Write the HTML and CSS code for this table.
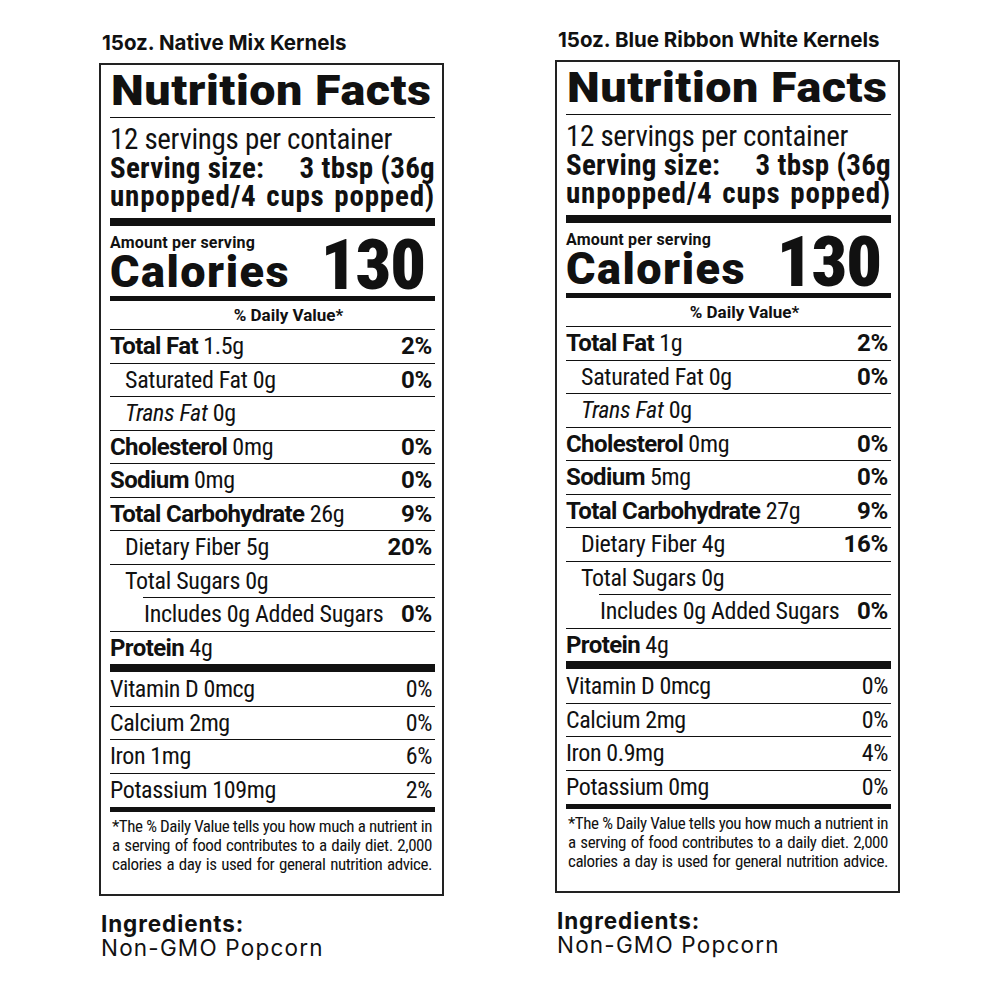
FILE: index.html
```html
<!DOCTYPE html>
<html lang="en">
<head>
<meta charset="utf-8">
<title>Nutrition Facts</title>
<link rel="stylesheet" href="styles.css">
</head>
<body>
<main class="page">
  <section class="col col--left">
    <h2 class="product">15oz. Native Mix Kernels</h2>
    <div class="label">
      <h1 class="label__title"><span class="label__title-text">Nutrition Facts</span></h1>
      <div class="serving">
        <div class="serving__count">12 servings per container</div>
        <div class="serving__size"><span>Serving size:</span><span>3 tbsp (36g</span></div>
        <div class="serving__popped">unpopped/4 cups popped)</div>
      </div>
      <div class="calories">
        <div class="calories__left">
          <div class="calories__amount">Amount per serving</div>
          <div class="calories__word">Calories</div>
        </div>
        <div class="calories__num">130</div>
      </div>
      <div class="dv">% Daily Value*</div>
      <div class="nutrients">
        <div class="row"><span><b>Total Fat</b> 1.5g</span><b>2%</b></div>
        <div class="row row--sub"><span>Saturated Fat 0g</span><b>0%</b></div>
        <div class="row row--sub"><span><i>Trans Fat</i> 0g</span></div>
        <div class="row"><span><b>Cholesterol</b> 0mg</span><b>0%</b></div>
        <div class="row"><span><b>Sodium</b> 0mg</span><b>0%</b></div>
        <div class="row"><span><b>Total Carbohydrate</b> 26g</span><b>9%</b></div>
        <div class="row row--sub"><span>Dietary Fiber 5g</span><b>20%</b></div>
        <div class="row row--sub"><span>Total Sugars 0g</span></div>
        <div class="row row--sub2"><span>Includes 0g Added Sugars</span><b>0%</b></div>
        <div class="row"><span><b>Protein</b> 4g</span></div>
      </div>
      <div class="vitamins">
        <div class="vrow"><span>Vitamin D 0mcg</span><span>0%</span></div>
        <div class="vrow"><span>Calcium 2mg</span><span>0%</span></div>
        <div class="vrow"><span>Iron 1mg</span><span>6%</span></div>
        <div class="vrow"><span>Potassium 109mg</span><span>2%</span></div>
      </div>
      <p class="foot">*The % Daily Value tells you how much a nutrient in<br>a serving of food contributes to a daily diet. 2,000<br>calories a day is used for general nutrition advice.</p>
    </div>
    <div class="ingredients">
      <div class="ingredients__title">Ingredients:</div>
      <div class="ingredients__text">Non-GMO Popcorn</div>
    </div>
  </section>

  <section class="col col--right">
    <h2 class="product">15oz. Blue Ribbon White Kernels</h2>
    <div class="label">
      <h1 class="label__title"><span class="label__title-text">Nutrition Facts</span></h1>
      <div class="serving">
        <div class="serving__count">12 servings per container</div>
        <div class="serving__size"><span>Serving size:</span><span>3 tbsp (36g</span></div>
        <div class="serving__popped">unpopped/4 cups popped)</div>
      </div>
      <div class="calories">
        <div class="calories__left">
          <div class="calories__amount">Amount per serving</div>
          <div class="calories__word">Calories</div>
        </div>
        <div class="calories__num">130</div>
      </div>
      <div class="dv">% Daily Value*</div>
      <div class="nutrients">
        <div class="row"><span><b>Total Fat</b> 1g</span><b>2%</b></div>
        <div class="row row--sub"><span>Saturated Fat 0g</span><b>0%</b></div>
        <div class="row row--sub"><span><i>Trans Fat</i> 0g</span></div>
        <div class="row"><span><b>Cholesterol</b> 0mg</span><b>0%</b></div>
        <div class="row"><span><b>Sodium</b> 5mg</span><b>0%</b></div>
        <div class="row"><span><b>Total Carbohydrate</b> 27g</span><b>9%</b></div>
        <div class="row row--sub"><span>Dietary Fiber 4g</span><b>16%</b></div>
        <div class="row row--sub"><span>Total Sugars 0g</span></div>
        <div class="row row--sub2"><span>Includes 0g Added Sugars</span><b>0%</b></div>
        <div class="row"><span><b>Protein</b> 4g</span></div>
      </div>
      <div class="vitamins">
        <div class="vrow"><span>Vitamin D 0mcg</span><span>0%</span></div>
        <div class="vrow"><span>Calcium 2mg</span><span>0%</span></div>
        <div class="vrow"><span>Iron 0.9mg</span><span>4%</span></div>
        <div class="vrow"><span>Potassium 0mg</span><span>0%</span></div>
      </div>
      <p class="foot">*The % Daily Value tells you how much a nutrient in<br>a serving of food contributes to a daily diet. 2,000<br>calories a day is used for general nutrition advice.</p>
    </div>
    <div class="ingredients">
      <div class="ingredients__title">Ingredients:</div>
      <div class="ingredients__text">Non-GMO Popcorn</div>
    </div>
  </section>
</main>
</body>
</html>
```
FILE: styles.css
```css
* { box-sizing: border-box; }

html, body {
  margin: 0;
  padding: 0;
  background: #ffffff;
  color: #111111;
}

.page {
  display: flex;
  align-items: flex-start;
  gap: 111px;
  padding-left: 99px;
}

.col {
  width: 345px;
  display: flex;
  flex-direction: column;
}

.col--left { padding-top: 31px; }
.col--right { padding-top: 28px; }

.product {
  margin: 0 0 8px 3px;
  font-family: "Inter", "Lato", sans-serif;
  font-weight: 700;
  font-size: 20.5px;
  letter-spacing: 0;
  line-height: 24px;
  color: #111;
}

.label {
  border: 2px solid #222;
  padding: 0 7px 0 9px;
  font-family: "Roboto", sans-serif;
  font-stretch: 75%;
  color: #111;
  height: 833px;
}

.label__title {
  margin: 0;
  padding: 4px 0 6px 1px;
  font-size: 43px;
  line-height: 42px;
  font-weight: 900;
  font-stretch: 100%;
  white-space: nowrap;
  border-bottom: 1px solid #111;
}

.label__title-text {
  display: inline-block;
  letter-spacing: 0.5px;
  transform: scaleX(1.085);
  transform-origin: left center;
}

.serving {
  padding: 7px 0 7.5px 0;
  font-size: 29px;
  line-height: 28.5px;
  border-bottom: 8px solid #111;
  white-space: nowrap;
}

.serving__count {
  font-weight: 400;
  letter-spacing: -0.3px;
}

.serving__size {
  display: flex;
  justify-content: space-between;
  font-weight: 700;
  font-stretch: 85%;
  letter-spacing: 0.3px;
}

.serving__popped {
  font-weight: 700;
  font-stretch: 85%;
  letter-spacing: 0.8px;
  text-align: justify;
  text-align-last: justify;
}

.calories {
  display: flex;
  justify-content: space-between;
  align-items: flex-end;
  padding: 7.5px 10px 4.5px 0;
  border-bottom: 5px solid #111;
}

.calories__amount {
  font-size: 16px;
  line-height: 18px;
  font-weight: 700;
  font-stretch: 100%;
  letter-spacing: 0.2px;
}

.calories__word {
  font-size: 45px;
  line-height: 40px;
  font-weight: 900;
  font-stretch: 100%;
  letter-spacing: 1.5px;
}

.calories__num {
  font-size: 70px;
  line-height: 53px;
  font-weight: 900;
  letter-spacing: -1px;
}

.dv {
  height: 28px;
  line-height: 28px;
  font-size: 17px;
  font-weight: 700;
  font-stretch: 95%;
  text-align: center;
  padding-left: 32px;
}

.row {
  display: flex;
  justify-content: space-between;
  height: 33.5px;
  line-height: 32px;
  border-top: 1.5px solid #111;
  font-size: 24px;
  letter-spacing: -0.3px;
  white-space: nowrap;
  padding-right: 3px;
}

.row b { font-weight: 700; font-stretch: 100%; letter-spacing: -0.6px; }
.row > b { letter-spacing: -0.3px; font-stretch: 90%; }
.row i { font-style: italic; }

.row--sub { padding-left: 15px; }
.row--sub2 { margin-left: 33px; padding-left: 1px; }

.vitamins {
  border-top: 8px solid #111;
}

.vrow {
  display: flex;
  justify-content: space-between;
  height: 33.7px;
  line-height: 32px;
  border-top: 1.5px solid #111;
  font-size: 24px;
  letter-spacing: -0.4px;
  padding-right: 3px;
  white-space: nowrap;
}

.vrow:first-child {
  border-top: 0;
  padding-top: 1px;
}

.foot {
  margin: 0;
  border-top: 5px solid #111;
  padding: 5.7px 3px 0 2px;
  font-size: 17px;
  line-height: 19px;
  letter-spacing: -0.45px;
  text-align: justify;
  text-align-last: justify;
  white-space: nowrap;
}

.ingredients {
  margin-top: 16px;
  padding-left: 2px;
  font-family: "Inter", "Lato", sans-serif;
  font-size: 22.5px;
  line-height: 24px;
  color: #111;
}

.ingredients__title { font-weight: 700; letter-spacing: 0.9px; }
.ingredients__text { font-weight: 400; letter-spacing: 1.2px; }
```
